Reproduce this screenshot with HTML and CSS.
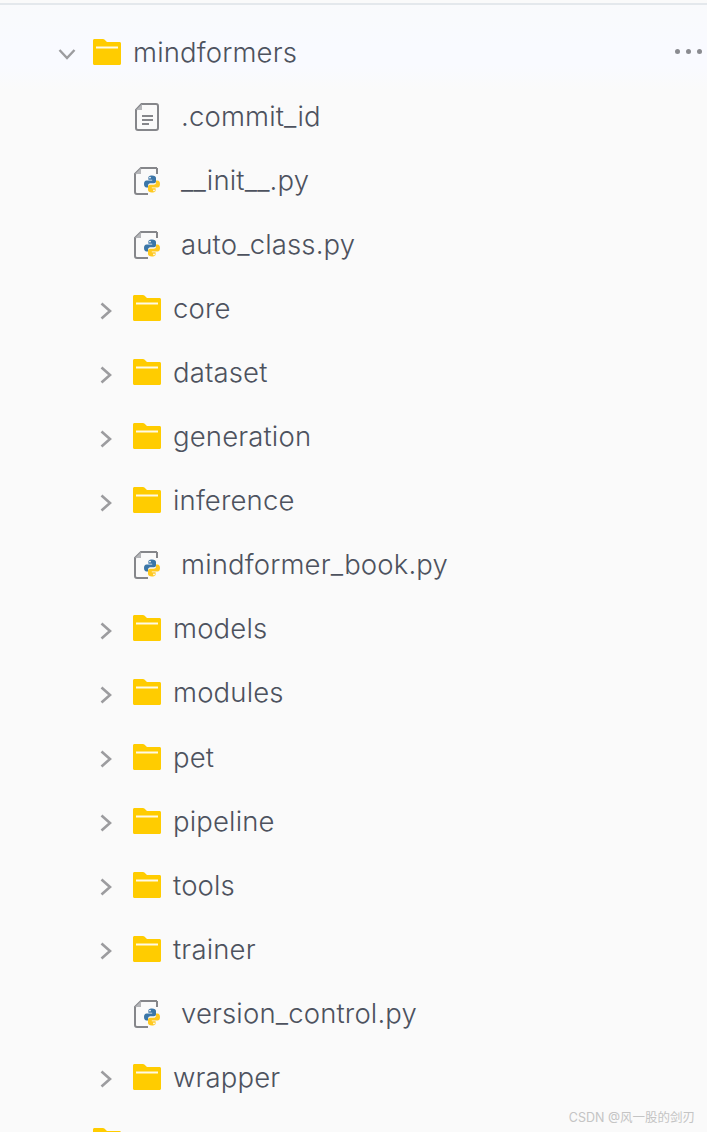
FILE: index.html
```
<!DOCTYPE html>
<html lang="en">
<head>
<meta charset="utf-8">
<title>mindformers</title>
<link rel="stylesheet" href="styles.css">
</head>
<body>
<svg class="defs" width="0" height="0" aria-hidden="true">
  <symbol id="folder" viewBox="0 0 28 26">
    <path fill="#ffcc00" d="M1.500 0H10c.6 0 1 .2 1.400.6L14 3h12.500C27.400 3 28 3.600 28 4.500v20c0 .9-.6 1.500-1.500 1.500h-25C.6 26 0 25.400 0 24.500v-23C0 .6.6 0 1.500 0z"/>
    <rect x="3" y="7.500" width="22" height="2" fill="#fff" opacity=".9"/>
  </symbol>
  <symbol id="chev-right" viewBox="0 0 12 18">
    <path d="M1.500 1.500l8.500 7.500-8.500 7.500" fill="none" stroke="#9c9c9f" stroke-width="2.600"/>
  </symbol>
  <symbol id="chev-down" viewBox="0 0 18 12">
    <path d="M1.500 2l7.500 8 7.500-8" fill="none" stroke="#9c9c9f" stroke-width="2.400"/>
  </symbol>
  <symbol id="doc" viewBox="0 0 26 30">
    <path d="M7.500 2H22a2 2 0 0 1 2 2v22a2 2 0 0 1-2 2H4a2 2 0 0 1-2-2V8z" fill="none" stroke="#85868a" stroke-width="2"/>
    <path d="M8 2v6H2z" fill="#b5b6b9"/>
    <path d="M8 14h11M8 18h11M8 22h7" stroke="#85868a" stroke-width="1.800" fill="none"/>
  </symbol>
  <symbol id="py" viewBox="0 0 26 30">
    <path d="M23 2H7L1 8v18a2 2 0 0 0 2 2h11M23 2v6" fill="none" stroke="#85868a" stroke-width="2"/>
    <path d="M7 2v6H1z" fill="#b5b6b9"/>
    <g transform="translate(10 9.500)">
      <path fill="#3b76a8" fill-rule="evenodd" d="M8 0C4.800 0 4.400 1.300 4.400 2.500v1.700h3.800v.7H2.500C1 4.900 0 6.200 0 8.500S1 12 2.500 12H4v-2c0-1.300 1-2.300 2.300-2.300H10c1.100 0 2-.9 2-2V2.500C12 1 10.500 0 8 0zM6 1.200a.9.900 0 1 1 0 1.800.9.900 0 0 1 0-1.800z"/>
      <path fill="#ffc91f" fill-rule="evenodd" d="M8 17c3.200 0 3.600-1.300 3.600-2.500v-1.700H7.800v-.7h5.700c1.500 0 2.500-1.300 2.500-3.600S15 5 13.500 5H12v2c0 1.300-1 2.300-2.300 2.300H6c-1.100 0-2 .9-2 2v3.200C4 16 5.500 17 8 17zm2-1.200a.9.900 0 1 1 0-1.800.9.900 0 0 1 0 1.800z"/>
    </g>
  </symbol>
</svg>

<main class="tree">
  <div class="row row-open">
    <svg class="chev-down"><use href="#chev-down"/></svg>
    <svg class="folder"><use href="#folder"/></svg>
    <span class="name">mindformers</span>
    <span class="more"><i></i><i></i><i></i></span>
  </div>
  <div class="row row-file"><svg class="file"><use href="#doc"/></svg><span class="name">.commit_id</span></div>
  <div class="row row-file"><svg class="file"><use href="#py"/></svg><span class="name">__init__.py</span></div>
  <div class="row row-file"><svg class="file"><use href="#py"/></svg><span class="name">auto_class.py</span></div>
  <div class="row row-dir"><svg class="chev"><use href="#chev-right"/></svg><svg class="folder"><use href="#folder"/></svg><span class="name">core</span></div>
  <div class="row row-dir"><svg class="chev"><use href="#chev-right"/></svg><svg class="folder"><use href="#folder"/></svg><span class="name">dataset</span></div>
  <div class="row row-dir"><svg class="chev"><use href="#chev-right"/></svg><svg class="folder"><use href="#folder"/></svg><span class="name">generation</span></div>
  <div class="row row-dir"><svg class="chev"><use href="#chev-right"/></svg><svg class="folder"><use href="#folder"/></svg><span class="name">inference</span></div>
  <div class="row row-file"><svg class="file"><use href="#py"/></svg><span class="name">mindformer_book.py</span></div>
  <div class="row row-dir"><svg class="chev"><use href="#chev-right"/></svg><svg class="folder"><use href="#folder"/></svg><span class="name">models</span></div>
  <div class="row row-dir"><svg class="chev"><use href="#chev-right"/></svg><svg class="folder"><use href="#folder"/></svg><span class="name">modules</span></div>
  <div class="row row-dir"><svg class="chev"><use href="#chev-right"/></svg><svg class="folder"><use href="#folder"/></svg><span class="name">pet</span></div>
  <div class="row row-dir"><svg class="chev"><use href="#chev-right"/></svg><svg class="folder"><use href="#folder"/></svg><span class="name">pipeline</span></div>
  <div class="row row-dir"><svg class="chev"><use href="#chev-right"/></svg><svg class="folder"><use href="#folder"/></svg><span class="name">tools</span></div>
  <div class="row row-dir"><svg class="chev"><use href="#chev-right"/></svg><svg class="folder"><use href="#folder"/></svg><span class="name">trainer</span></div>
  <div class="row row-file"><svg class="file"><use href="#py"/></svg><span class="name">version_control.py</span></div>
  <div class="row row-dir"><svg class="chev"><use href="#chev-right"/></svg><svg class="folder"><use href="#folder"/></svg><span class="name">wrapper</span></div>
  <div class="row row-open"><span class="chev-space"></span><svg class="folder"><use href="#folder"/></svg></div>
</main>
<div class="mark">CSDN @风一股的剑刃</div>
</body>
</html>
```
FILE: styles.css
```
html, body {
  margin: 0;
  height: 100%;
  overflow: hidden;
}
body {
  position: relative;
  background: #fafafa;
  font-family: Inter, "Noto Sans CJK SC", sans-serif;
}
.defs {
  display: block;
  position: absolute;
}
.tree {
  margin-top: 3px;
  border-top: 2px solid #e4e8ec;
  padding-top: 16px;
  background: linear-gradient(#f9fafc 0, #f9faff 40px, #f9faff 60px, #fafafa 85px);
}
.row {
  display: flex;
  align-items: center;
  height: 64.05px;
  box-sizing: border-box;
}
.row-open { padding-left: 58px; }
.row-dir { padding-left: 100px; }
.row-file { padding-left: 134px; }
.chev-down {
  width: 18px;
  height: 12px;
  margin-right: 17px;
  margin-top: 2px;
}
.chev-space {
  width: 18px;
  margin-right: 17px;
}
.chev {
  width: 12px;
  height: 18px;
  margin-right: 21px;
  margin-top: 3px;
}
.folder {
  width: 28px;
  height: 26px;
  margin-right: 12px;
  margin-top: -2px;
}
.file {
  width: 26px;
  height: 30px;
  margin-right: 21px;
}
.name {
  font-size: 27.500px;
  font-weight: 300;
  letter-spacing: 0.15px;
  line-height: 32px;
  margin-top: -2px;
  color: #4d525e;
}
.more {
  display: flex;
  gap: 6px;
  margin-left: auto;
  margin-right: 5px;
  margin-top: -4px;
}
.more i {
  width: 5px;
  height: 5px;
  border-radius: 50%;
  background: #8a8b90;
}
.mark {
  position: absolute;
  right: 12px;
  bottom: 5px;
  font-size: 12.500px;
  line-height: 18px;
  color: #c4c4c4;
}
```
